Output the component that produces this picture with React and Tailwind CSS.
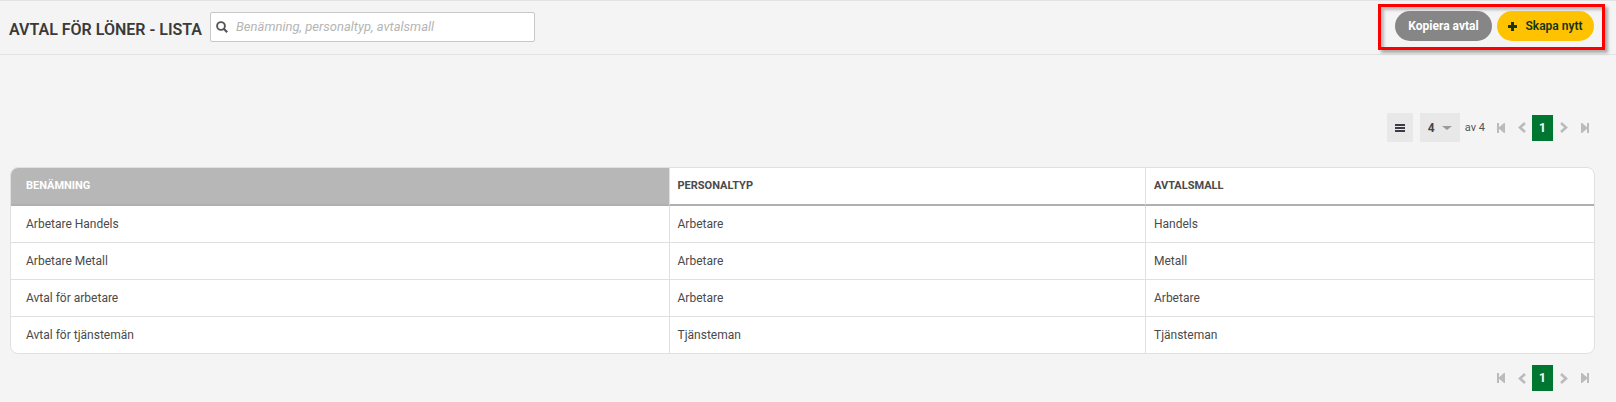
import React, { useState } from "react";

const rows = [
  { name: "Arbetare Handels", type: "Arbetare", template: "Handels" },
  { name: "Arbetare Metall", type: "Arbetare", template: "Metall" },
  { name: "Avtal för arbetare", type: "Arbetare", template: "Arbetare" },
  { name: "Avtal för tjänstemän", type: "Tjänsteman", template: "Tjänsteman" },
];

function SearchIcon() {
  return (
    <svg viewBox="0 0 12 12" className="size-3 shrink-0" fill="none" stroke="#555" strokeWidth="1.9">
      <circle cx="5" cy="5" r="3.9" />
      <path d="M7.8 7.8 11.2 11.2" strokeWidth="2.2" />
    </svg>
  );
}

function PlusIcon() {
  return (
    <svg viewBox="0 0 9 9" className="size-[9px]" fill="currentColor">
      <path d="M3 0h3v3h3v3H6v3H3V6H0V3h3z" />
    </svg>
  );
}

function MenuIcon() {
  return (
    <svg viewBox="0 0 10 8" className="h-2 w-[10px]" fill="currentColor">
      <path d="M0 0h10v2H0zM0 3h10v2H0zM0 6h10v2H0z" />
    </svg>
  );
}

function FirstIcon() {
  return (
    <svg viewBox="0 0 8 10" className="h-[10px] w-2" fill="currentColor">
      <path d="M0 0h2v4.3L7 0h1v10H7L2 5.7V10H0z" />
    </svg>
  );
}

function LastIcon() {
  return (
    <svg viewBox="0 0 8 10" className="h-[10px] w-2" fill="currentColor">
      <path d="M8 0H6v4.3L1 0H0v10h1l5-4.3V10h2z" />
    </svg>
  );
}

function PrevIcon() {
  return (
    <svg viewBox="0 0 8 11" className="h-[11px] w-2" fill="none" stroke="currentColor" strokeWidth="2.6">
      <path d="M7 1 2 5.5 7 10" />
    </svg>
  );
}

function NextIcon() {
  return (
    <svg viewBox="0 0 8 11" className="h-[11px] w-2" fill="none" stroke="currentColor" strokeWidth="2.6">
      <path d="M1 1l5 4.5L1 10" />
    </svg>
  );
}

function Pager() {
  const arrow = "flex h-[26px] w-[21px] items-center justify-center";
  return (
    <nav aria-label="Sidor" className="flex items-center text-[#bbbbbd]">
      <button type="button" aria-label="Första sidan" className={arrow}>
        <FirstIcon />
      </button>
      <button type="button" aria-label="Föregående sida" className={arrow}>
        <PrevIcon />
      </button>
      <button type="button" className="h-[26px] w-[21px] bg-[#007731] text-xs font-bold text-white">
        1
      </button>
      <button type="button" aria-label="Nästa sida" className={arrow}>
        <NextIcon />
      </button>
      <button type="button" aria-label="Sista sidan" className={arrow}>
        <LastIcon />
      </button>
    </nav>
  );
}

export default function App() {
  const [search, setSearch] = useState("");

  return (
    <div className="min-h-screen bg-[#f4f4f4] font-['Roboto',sans-serif] text-xs text-[#4a4a4a]">
      <header className="flex items-start justify-between border-y border-[#e2e2e2] pr-[11px] pl-[9px]">
        <div className="flex items-end gap-2 pt-[11px] pb-3">
          <h1 className="text-base font-semibold text-[#3a3a3a]">AVTAL FÖR LÖNER - LISTA</h1>
          <label className="flex h-[30px] w-[325px] items-center gap-2 rounded-xs border border-[#c8c8c8] bg-white px-[5px]">
            <SearchIcon />
            <input
              type="text"
              aria-label="Sök avtal"
              placeholder="Benämning, personaltyp, avtalsmall"
              className="min-w-0 flex-1 text-[13px] placeholder:text-[#b5b5b5] placeholder:italic focus:outline-none"
              value={search}
              onChange={(e) => setSearch(e.target.value)}
            />
          </label>
        </div>

        {/* knappar */}
        <div className="mt-[3px] flex gap-[5px] border-3 border-[#fe0000] px-2 pt-1 pb-[6px] pl-[14px] shadow-[3px_3px_3px_#aaa,inset_3px_3px_3px_#bbb]">
          <button type="button" className="h-[30px] w-[97px] rounded-full bg-[#868686] text-xs font-bold text-white">
            Kopiera avtal
          </button>
          <button
            type="button"
            className="flex h-[30px] w-[97px] items-center justify-center gap-2 rounded-full bg-[#ffc200] text-xs font-semibold text-[#14341c]"
          >
            <PlusIcon />
            Skapa nytt
          </button>
        </div>
      </header>

      <main className="pt-[58px] pr-[21px] pl-[10px]">
        <div className="flex items-center justify-end">
          <button
            type="button"
            aria-label="Meny"
            className="mr-[7px] flex h-[29px] w-[26px] items-center justify-center bg-[#e8e8e8] text-[#3c3c44]"
          >
            <MenuIcon />
          </button>
          <div className="relative mr-[5px]">
            <select aria-label="Rader per sida" className="h-[29px] w-10 appearance-none bg-[#e8e8e8] pl-2 text-xs font-bold text-[#444]">
              <option>4</option>
            </select>
            <svg viewBox="0 0 10 4" className="pointer-events-none absolute top-[13px] right-2 h-1 w-[10px]" fill="#999">
              <path d="M0 0h10L5 4z" />
            </svg>
          </div>
          <span className="mr-[5px] pt-px text-[11px] text-[#555]">av 4</span>
          <Pager />
        </div>

        <div className="mt-[25px] overflow-hidden rounded-lg border border-[#e0e0e0] bg-white">
          <table className="w-full table-fixed border-separate border-spacing-0 text-left">
            <colgroup>
              <col className="w-[41.6%]" />
              <col className="w-[30.1%]" />
              <col />
            </colgroup>
            <thead>
              <tr className="h-[38px] text-[11px] [&>th]:border-b-2 [&>th]:border-b-[#b0b0b0]">
                <th className="border-r border-r-[#e0e0e0] bg-[#b7b7b7] pl-[15px] font-bold text-white">BENÄMNING</th>
                <th className="border-r border-r-[#e0e0e0] pl-2 font-bold">PERSONALTYP</th>
                <th className="pl-2 font-bold">AVTALSMALL</th>
              </tr>
            </thead>
            <tbody className="[&>tr:last-child>td]:border-b-0">
              {rows.map((row) => (
                <tr key={row.name} className="h-[37px] last:h-9 [&>td]:border-b [&>td]:border-[#e0e0e0]">
                  <td className="border-r pl-[15px]">{row.name}</td>
                  <td className="border-r pl-2">{row.type}</td>
                  <td className="pl-2">{row.template}</td>
                </tr>
              ))}
            </tbody>
          </table>
        </div>

        <div className="flex justify-end pt-[11px]">
          <Pager />
        </div>
      </main>
    </div>
  );
}
